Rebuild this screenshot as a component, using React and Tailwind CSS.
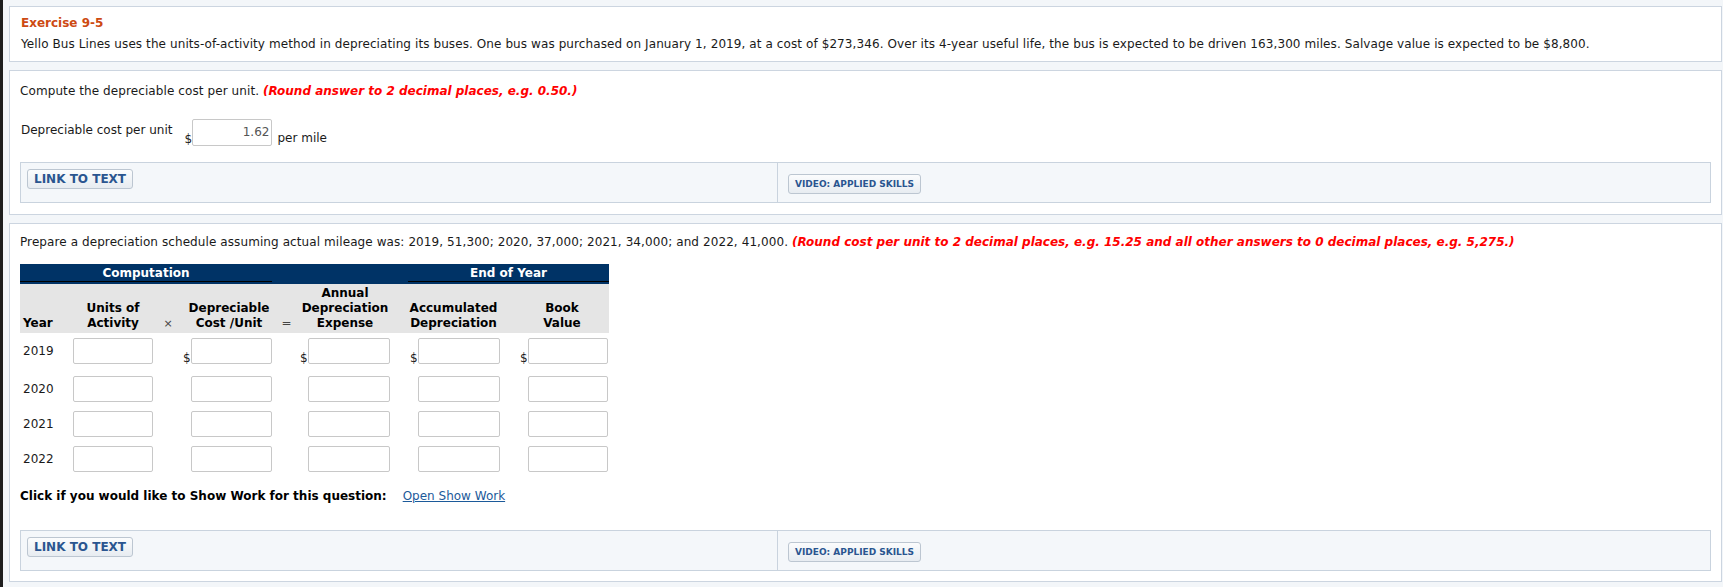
import React from "react";

function Btn({ children, small }) {
  return (
    <span
      className={
        "inline-flex items-center h-[20px] px-[6px] border border-[#bcc6d1] rounded-[3px] bg-linear-to-b from-[#fbfcfd] to-[#e7ecf1] text-[#2a5590] font-bold whitespace-nowrap " +
        (small ? "text-[9px] leading-[18px]" : "text-[12px] leading-[18px]")
      }
    >
      {children}
    </span>
  );
}

function LinkPanel() {
  return (
    <div className="flex h-[41px] border border-[#c9d3de] bg-[#f4f7fa]">
      <div className="w-[757px] shrink-0 border-r border-[#c9d3de] pl-[6px] pt-[6px]">
        <Btn>LINK TO TEXT</Btn>
      </div>
      <div className="flex-1 flex items-center pl-[10px] pt-[2px]">
        <Btn small>VIDEO: APPLIED SKILLS</Btn>
      </div>
    </div>
  );
}

function Input({ w, value }) {
  return (
    <div
      className={
        "h-[26px] border border-[#c8c8c8] rounded-[2px] bg-white text-right pr-[2px] text-[#555] leading-[24px] " +
        w
      }
    >
      {value}
    </div>
  );
}

function Dollar({ show }) {
  return (
    <span className={"w-[8px] leading-[14px] self-end translate-y-[1px] " + (show ? "" : "invisible")}>
      $
    </span>
  );
}

const cols = "grid grid-cols-[48px_90px_20px_97px_23px_94px_123px_94px]";

function Row({ year, first, mt }) {
  return (
    <div className={cols + " h-[26px] " + mt}>
      <div className="pl-[3px] flex items-center">{year}</div>
      <div className="pl-[5px] flex">
        <Input w="w-[80px]" />
      </div>
      <div />
      <div className="pl-[5px] flex">
        <Dollar show={first} />
        <Input w="w-[81px]" />
      </div>
      <div />
      <div className="pl-[2px] flex">
        <Dollar show={first} />
        <Input w="w-[82px]" />
      </div>
      <div className="pl-[18px] flex">
        <Dollar show={first} />
        <Input w="w-[82px]" />
      </div>
      <div className="pl-[5px] flex">
        <Dollar show={first} />
        <Input w="w-[80px]" />
      </div>
    </div>
  );
}

export default function App() {
  return (
    <div className="min-h-[587px] w-full bg-[#f3f6f9] flex font-['DejaVu_Sans',Verdana,sans-serif] text-[12px] leading-[16px] text-[#1a1a1a]">
      <div className="w-[3px] shrink-0 bg-[#1e1e1e]" />
      <div className="flex-1 pl-[6px] pr-[1px] pt-[6px] flex flex-col gap-[8px]">
        {/* Box 1 */}
        <div className="border border-[#ccd5e0] bg-white px-[11px] pt-[8px] pb-[9px]">
          <div className="font-bold text-[#cd4a12]">Exercise 9-5</div>
          <div className="mt-[5px] whitespace-nowrap tracking-[0.09px]">
            Yello Bus Lines uses the units-of-activity method in depreciating its buses. One bus was purchased on January 1, 2019, at a cost of $273,346. Over its 4-year useful life, the bus is expected to be driven 163,300 miles. Salvage value is expected to be $8,800.
          </div>
        </div>

        {/* Box 2 */}
        <div className="border border-[#ccd5e0] bg-white px-[10px] pt-[12px] pb-[11px]">
          <div className="whitespace-nowrap">
            <span className="tracking-[0.09px]">Compute the depreciable cost per unit.</span>{" "}
            <span className="font-bold italic text-[#ff0000]">
              (Round answer to 2 decimal places, e.g. 0.50.)
            </span>
          </div>
          <div className="mt-[20px] flex items-end h-[27px]">
            <span className="self-start mt-[3px] pl-[1px]">Depreciable cost per unit</span>
            <span className="ml-[12px] w-[8px] leading-[14px]">$</span>
            <div className="h-[27px] w-[80px] border border-[#c8c8c8] rounded-[2px] bg-white text-right pr-[2px] text-[#555] leading-[25px]">
              1.62
            </div>
            <span className="ml-[5px] leading-[15px]">per mile</span>
          </div>
          <div className="mt-[16px]">
            <LinkPanel />
          </div>
        </div>

        {/* Box 3 */}
        <div className="border border-[#ccd5e0] bg-white px-[10px] pt-[10px] pb-[10px]">
          <div className="whitespace-nowrap">
            <span className="tracking-[0.09px]">
              Prepare a depreciation schedule assuming actual mileage was: 2019, 51,300; 2020, 37,000; 2021, 34,000; and 2022, 41,000.
            </span>{" "}
            <span className="font-bold italic text-[#ff0000]">
              (Round cost per unit to 2 decimal places, e.g. 15.25 and all other answers to 0 decimal places, e.g. 5,275.)
            </span>
          </div>

          <div className="mt-[14px] w-[589px]">
            <div className="flex h-[20px] bg-[#003366] pt-[1px] text-white font-bold">
              <div className="w-[252px] h-[17px] border-b border-black text-center leading-[16px]">
                Computation
              </div>
              <div className="w-[136px]" />
              <div className="w-[201px] h-[17px] border-b border-black text-center leading-[16px]">
                End of Year
              </div>
            </div>
            <div className={cols + " h-[49px] bg-[#e5e5e5] items-end pb-[2px] font-bold leading-[15px] text-black"}>
              <div className="pl-[3px]">Year</div>
              <div className="text-center">
                Units of
                <br />
                Activity
              </div>
              <div className="text-center font-normal text-[11px] text-[#444]">×</div>
              <div className="text-center pl-[5px]">
                Depreciable
                <br />
                Cost /Unit
              </div>
              <div className="text-center font-normal text-[#444]">=</div>
              <div className="text-center">
                Annual
                <br />
                Depreciation
                <br />
                Expense
              </div>
              <div className="text-center">
                Accumulated
                <br />
                Depreciation
              </div>
              <div className="text-center">
                Book
                <br />
                Value
              </div>
            </div>
            <Row year="2019" first mt="mt-[5px]" />
            <Row year="2020" mt="mt-[12px]" />
            <Row year="2021" mt="mt-[9px]" />
            <Row year="2022" mt="mt-[9px]" />
          </div>

          <div className="mt-[16px] whitespace-nowrap">
            <span className="font-bold text-black">
              Click if you would like to Show Work for this question:
            </span>
            <span className="ml-[16px] text-[#1c5a9a] underline">Open Show Work</span>
          </div>

          <div className="mt-[26px]">
            <LinkPanel />
          </div>
        </div>
      </div>
    </div>
  );
}
